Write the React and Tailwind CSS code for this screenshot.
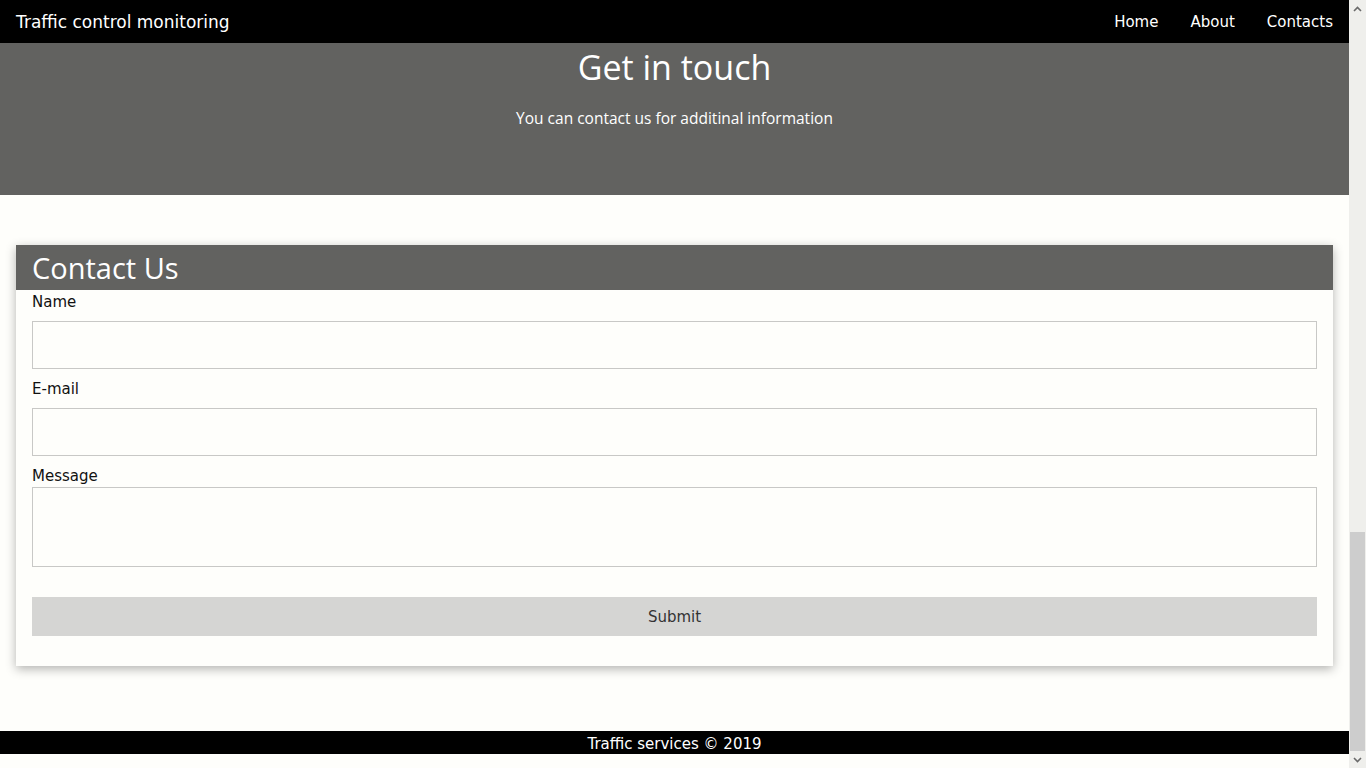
const body = { fontFamily: '"DejaVu Sans", Verdana, sans-serif' };
const heading = { fontFamily: '"Open Sans", "Segoe UI", sans-serif' };

function Field({ label, first, tall, last }) {
  return (
    <div>
      <div
        className={`text-[15px] leading-5 text-[#111] ${first ? "mt-[2px]" : "mt-[10px]"} ${last ? "mb-[1px]" : "mb-[9px]"}`}
        style={body}
      >
        {label}
      </div>
      {tall ? (
        <textarea className="block h-[80px] w-full resize-none border border-[#c8c8c6] bg-[#fefefb] outline-none" />
      ) : (
        <input className="block h-[48px] w-full border border-[#c8c8c6] bg-[#fefefb] outline-none" />
      )}
    </div>
  );
}

function Scrollbar() {
  return (
    <div className="flex w-[17px] flex-col bg-[#efefec]">
      <div className="flex h-[17px] items-center justify-center">
        <svg width="9" height="6" viewBox="0 0 9 6">
          <path d="M1 5 L4.5 1.5 L8 5" fill="none" stroke="#6a6a6a" strokeWidth="1.6" />
        </svg>
      </div>
      <div className="flex flex-1 flex-col justify-end px-[1px] pb-[1px]">
        <div className="h-[219px] bg-[#cdcdcd]" />
      </div>
      <div className="flex h-[16px] items-center justify-center">
        <svg width="9" height="6" viewBox="0 0 9 6">
          <path d="M1 1 L4.5 4.5 L8 1" fill="none" stroke="#6a6a6a" strokeWidth="1.6" />
        </svg>
      </div>
    </div>
  );
}

export default function App() {
  return (
    <div className="flex h-screen overflow-hidden bg-[#fefefb]">
      <div className="flex min-w-0 flex-1 flex-col">
        <header className="flex h-[43px] items-center justify-between bg-black px-4 pt-[2px] text-white" style={body}>
          <span className="text-[17px]">Traffic control monitoring</span>
          <nav className="flex gap-8 text-[15px]">
            <a href="#">Home</a>
            <a href="#">About</a>
            <a href="#">Contacts</a>
          </nav>
        </header>

        <section className="flex h-[152px] flex-col items-center bg-[#626260] text-white" style={heading}>
          <h1 className="mt-[2px] text-[34px] leading-[44px]">Get in touch</h1>
          <p className="mt-[19px] text-[15.5px] leading-5">You can contact us for additinal information</p>
        </section>

        <main className="px-4 pt-[50px]">
          <div className="bg-[#fefefb] shadow-[0_3px_10px_rgba(0,0,0,0.3)]">
            <div className="flex h-[45px] items-center bg-[#626260] px-4 text-white" style={heading}>
              <h2 className="text-[29px]">Contact Us</h2>
            </div>
            <form className="px-4 pb-[30px]">
              <Field label="Name" first />
              <Field label="E-mail" />
              <Field label="Message" tall last />
              <button
                type="button"
                className="mt-[30px] block h-[39px] w-full bg-[#d5d5d3] pt-[2px] text-[15px] text-[#333]"
                style={body}
              >
                Submit
              </button>
            </form>
          </div>
        </main>

        <footer className="mt-[65px] flex h-[23px] items-center justify-center bg-black pt-[3px] text-[15px] text-white" style={body}>
          Traffic services © 2019
        </footer>
      </div>
      <Scrollbar />
    </div>
  );
}
